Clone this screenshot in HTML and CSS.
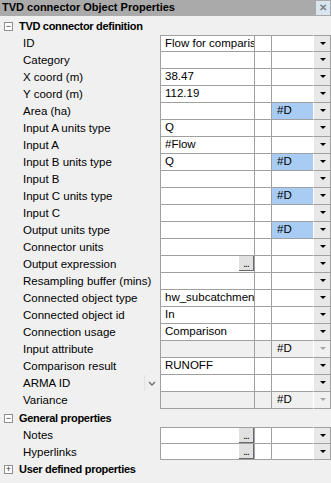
FILE: index.html
```html
<!DOCTYPE html>
<html lang="en">

<head>
    <meta charset="UTF-8">
    <title>TVD connector Object Properties</title>
    <link rel="stylesheet" href="styles.css">
</head>

<body>
    <div class="panel">
        <div class="titlebar">
            <span class="title">TVD connector Object Properties</span>
            <span class="close">&#x2715;</span>
        </div>

        <div class="section">
            <div class="section-head"><span class="toggle">&minus;</span>TVD connector definition</div>
            <div class="rows">
                <div class="row"><div class="label">ID</div><div class="cell c1">Flow for comparis</div><div class="cell c2"></div><div class="cell c3"></div><div class="cell btn"><span class="arrow"></span></div></div>
                <div class="row"><div class="label">Category</div><div class="cell c1"></div><div class="cell c2"></div><div class="cell c3"></div><div class="cell btn"><span class="arrow"></span></div></div>
                <div class="row"><div class="label">X coord (m)</div><div class="cell c1">38.47</div><div class="cell c2"></div><div class="cell c3"></div><div class="cell btn"><span class="arrow"></span></div></div>
                <div class="row"><div class="label">Y coord (m)</div><div class="cell c1">112.19</div><div class="cell c2"></div><div class="cell c3"></div><div class="cell btn"><span class="arrow"></span></div></div>
                <div class="row"><div class="label">Area (ha)</div><div class="cell c1"></div><div class="cell c2"></div><div class="cell c3 flag">#D</div><div class="cell btn"><span class="arrow"></span></div></div>
                <div class="row"><div class="label">Input A units type</div><div class="cell c1">Q</div><div class="cell c2"></div><div class="cell c3"></div><div class="cell btn"><span class="arrow"></span></div></div>
                <div class="row"><div class="label">Input A</div><div class="cell c1">#Flow</div><div class="cell c2"></div><div class="cell c3"></div><div class="cell btn"><span class="arrow"></span></div></div>
                <div class="row"><div class="label">Input B units type</div><div class="cell c1">Q</div><div class="cell c2"></div><div class="cell c3 flag">#D</div><div class="cell btn"><span class="arrow"></span></div></div>
                <div class="row"><div class="label">Input B</div><div class="cell c1"></div><div class="cell c2"></div><div class="cell c3"></div><div class="cell btn"><span class="arrow"></span></div></div>
                <div class="row"><div class="label">Input C units type</div><div class="cell c1"></div><div class="cell c2"></div><div class="cell c3 flag">#D</div><div class="cell btn"><span class="arrow"></span></div></div>
                <div class="row"><div class="label">Input C</div><div class="cell c1"></div><div class="cell c2"></div><div class="cell c3"></div><div class="cell btn"><span class="arrow"></span></div></div>
                <div class="row"><div class="label">Output units type</div><div class="cell c1"></div><div class="cell c2"></div><div class="cell c3 flag">#D</div><div class="cell btn"><span class="arrow"></span></div></div>
                <div class="row"><div class="label">Connector units</div><div class="cell c1"></div><div class="cell c2"></div><div class="cell c3"></div><div class="cell btn"><span class="arrow"></span></div></div>
                <div class="row"><div class="label">Output expression</div><div class="cell c1"><span class="dots">...</span></div><div class="cell c2"></div><div class="cell c3"></div><div class="cell btn"><span class="arrow"></span></div></div>
                <div class="row"><div class="label">Resampling buffer (mins)</div><div class="cell c1"></div><div class="cell c2"></div><div class="cell c3"></div><div class="cell btn"><span class="arrow"></span></div></div>
                <div class="row"><div class="label">Connected object type</div><div class="cell c1">hw_subcatchmen</div><div class="cell c2"></div><div class="cell c3"></div><div class="cell btn"><span class="arrow"></span></div></div>
                <div class="row"><div class="label">Connected object id</div><div class="cell c1">In</div><div class="cell c2"></div><div class="cell c3"></div><div class="cell btn"><span class="arrow"></span></div></div>
                <div class="row"><div class="label">Connection usage</div><div class="cell c1">Comparison</div><div class="cell c2"></div><div class="cell c3"></div><div class="cell btn"><span class="arrow"></span></div></div>
                <div class="row off"><div class="label">Input attribute</div><div class="cell c1"></div><div class="cell c2"></div><div class="cell c3">#D</div><div class="cell btn"><span class="arrow"></span></div></div>
                <div class="row"><div class="label">Comparison result</div><div class="cell c1">RUNOFF</div><div class="cell c2"></div><div class="cell c3"></div><div class="cell btn"><span class="arrow"></span></div></div>
                <div class="row"><div class="label combo">ARMA ID<svg class="chev" width="8" height="6" viewBox="0 0 8 6"><path d="M1 1 L4 4 L7 1" fill="none" stroke="#707070" stroke-width="1.4"/></svg></div><div class="cell c1"></div><div class="cell c2"></div><div class="cell c3"></div><div class="cell btn"><span class="arrow"></span></div></div>
                <div class="row off"><div class="label">Variance</div><div class="cell c1"></div><div class="cell c2"></div><div class="cell c3">#D</div><div class="cell btn"><span class="arrow"></span></div></div>
            </div>
        </div>

        <div class="section">
            <div class="section-head"><span class="toggle">&minus;</span>General properties</div>
            <div class="rows tight">
                <div class="row"><div class="label">Notes</div><div class="cell c1"><span class="dots">...</span></div><div class="cell c2"></div><div class="cell c3"></div><div class="cell btn"><span class="arrow"></span></div></div>
                <div class="row"><div class="label">Hyperlinks</div><div class="cell c1"><span class="dots">...</span></div><div class="cell c2"></div><div class="cell c3"></div><div class="cell btn"><span class="arrow"></span></div></div>
            </div>
        </div>

        <div class="section">
            <div class="section-head"><span class="toggle">+</span>User defined properties</div>
        </div>
    </div>
</body>

</html>
```

FILE: styles.css
```css
body {
    margin: 0;
    padding: 0;
    background-color: #f0f0f0;
    font-family: "Liberation Sans", Arial, sans-serif;
    font-size: 11.5px;
    color: #000;
}

.panel {
    width: 331px;
    height: 483px;
    overflow: hidden;
}

.titlebar {
    position: relative;
    height: 16px;
    background-color: #aaaaaa;
    font-weight: bold;
    font-size: 11px;
    line-height: 15px;
    padding-left: 2px;
    margin-bottom: 1px;
}

.close {
    position: absolute;
    right: 1px;
    top: 1px;
    width: 14px;
    height: 14px;
    background-color: #d9e5ef;
    color: #76828d;
    font-size: 10px;
    font-weight: bold;
    line-height: 14px;
    text-align: center;
}

.section-head {
    height: 18px;
    font-weight: bold;
    font-size: 11px;
    letter-spacing: -0.3px;
    display: flex;
    align-items: center;
}

.toggle {
    width: 7px;
    height: 7px;
    border: 1px solid #8f8f8f;
    margin: 0 6px 0 4px;
    font-size: 9px;
    line-height: 7px;
    letter-spacing: 0;
    text-align: center;
    font-weight: normal;
    color: #333;
    background-color: #fff;
}

.row {
    display: grid;
    grid-template-columns: 160px 95px 17px 41px 18px;
    height: 17px;
}

.tight .row {
    height: 16px;
}

.tight .row:first-child {
    height: 17px;
}

.label {
    padding-left: 23px;
    line-height: 16px;
    white-space: nowrap;
    overflow: hidden;
}

.label.combo {
    position: relative;
}

.chev {
    position: absolute;
    left: 148px;
    top: 6px;
}

.label.combo::before {
    content: "";
    position: absolute;
    left: 144px;
    top: 0;
    width: 1px;
    height: 16px;
    background-color: #e2e2e2;
}

.cell {
    box-sizing: border-box;
    height: 100%;
    border-bottom: 1px solid #a0a0a0;
    border-right: 1px solid #a0a0a0;
    background-color: #fff;
    line-height: 15px;
    padding-left: 4px;
    white-space: nowrap;
    overflow: hidden;
    position: relative;
}

.rows .row:first-child .cell {
    border-top: 1px solid #a0a0a0;
}

.cell.c1 {
    border-left: 1px solid #a0a0a0;
}

.cell.c3 {
    border-right: none;
    padding-left: 5px;
}

.cell.flag {
    background-color: #a8ccf3;
}

.cell.btn {
    padding: 0;
    background-color: #e8e8e8;
    border-left: 1px solid #fff;
}

.arrow {
    position: absolute;
    left: 6px;
    top: 6px;
    width: 0;
    height: 0;
    border-left: 3px solid transparent;
    border-right: 3px solid transparent;
    border-top: 3px solid #000;
}

.row.off .cell {
    background-color: #f0f0f0;
}

.row.off .arrow {
    border-top-color: #a6a6a6;
}

.dots {
    position: absolute;
    right: 0;
    top: 0;
    width: 15px;
    height: 15px;
    background-color: #e1e1e1;
    border-right: 1px solid #696969;
    border-bottom: 1px solid #696969;
    box-sizing: border-box;
    font-size: 10px;
    line-height: 16px;
    text-align: center;
    letter-spacing: -1px;
}
```
